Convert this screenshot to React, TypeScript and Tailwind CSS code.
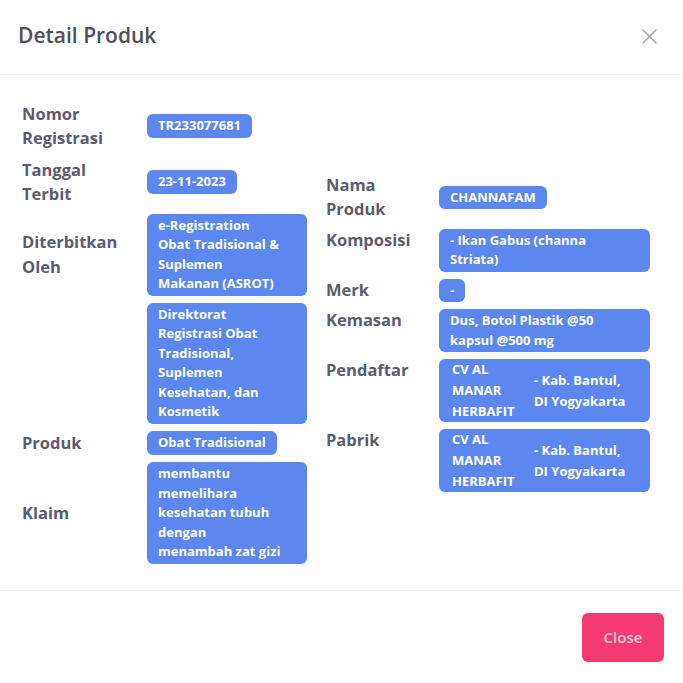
import React from "react";

const font = { fontFamily: "'Open Sans', Lato, sans-serif" };

function Badge({ lines, full }: { lines: string[]; full?: boolean }) {
  return (
    <div
      className={`${full ? "w-full" : "w-fit"} rounded-[6px] bg-[#5b87ef] px-[11px] py-[2px] text-[13px] font-bold leading-[19.5px] text-white`}
    >
      {lines.map((l, i) => (
        <span key={i} className="block whitespace-nowrap">
          {l}
        </span>
      ))}
    </div>
  );
}

function Label({ lines }: { lines: string[] }) {
  return (
    <div className="text-[16.5px] font-bold leading-[24.5px] text-[#5c5c6c]">
      {lines.map((l, i) => (
        <span key={i} className="block whitespace-nowrap">
          {l}
        </span>
      ))}
    </div>
  );
}

function CompanyBadge() {
  return (
    <div className="flex w-full items-center gap-[10px] rounded-[6px] bg-[#5b87ef] px-[13px] py-0 text-[13px] font-bold leading-[21px] text-white">
      <div className="w-[72px]">
        <span className="block whitespace-nowrap">CV AL</span>
        <span className="block whitespace-nowrap">MANAR</span>
        <span className="block whitespace-nowrap">HERBAFIT</span>
      </div>
      <div>
        <span className="block whitespace-nowrap">- Kab. Bantul,</span>
        <span className="block whitespace-nowrap">DI Yogyakarta</span>
      </div>
    </div>
  );
}

export default function App() {
  return (
    <div className="flex h-[683px] w-[683px] flex-col bg-white" style={font}>
      {/* Header */}
      <div className="flex h-[75px] items-center justify-between border-b border-[#eeeef0] pl-[18px] pr-[26px]">
        <h1 className="-mt-[2px] text-[21px] font-semibold text-[#4f4f59]">Detail Produk</h1>
        <svg width="15" height="15" viewBox="0 0 15 15" className="-mt-[1px] text-[#a9a9ae]">
          <path d="M1 1 L14 14 M14 1 L1 14" stroke="currentColor" strokeWidth="1.6" strokeLinecap="round" />
        </svg>
      </div>

      {/* Body */}
      <div className="flex flex-1 items-center pl-[22px] pr-[33px]">
        {/* Left table */}
        <div className="grid w-[285px] grid-cols-[125px_160px] gap-y-[7px]">
          <div className="flex items-center">
            <Label lines={["Nomor", "Registrasi"]} />
          </div>
          <div className="flex items-center">
            <Badge lines={["TR233077681"]} />
          </div>

          <div className="flex items-center">
            <Label lines={["Tanggal", "Terbit"]} />
          </div>
          <div className="flex items-center">
            <Badge lines={["23-11-2023"]} />
          </div>

          <div className="flex items-center">
            <Label lines={["Diterbitkan", "Oleh"]} />
          </div>
          <div>
            <Badge full lines={["e-Registration", "Obat Tradisional &", "Suplemen", "Makanan (ASROT)"]} />
          </div>

          <div />
          <div>
            <Badge
              full
              lines={["Direktorat", "Registrasi Obat", "Tradisional,", "Suplemen", "Kesehatan, dan", "Kosmetik"]}
            />
          </div>

          <div className="flex items-center">
            <Label lines={["Produk"]} />
          </div>
          <div className="flex items-center">
            <Badge lines={["Obat Tradisional"]} />
          </div>

          <div className="flex items-center">
            <Label lines={["Klaim"]} />
          </div>
          <div>
            <Badge full lines={["membantu", "memelihara", "kesehatan tubuh", "dengan", "menambah zat gizi"]} />
          </div>
        </div>

        {/* Right table */}
        <div className="ml-[19px] grid w-[324px] grid-cols-[113px_211px] gap-y-[7px]">
          <div className="flex items-center">
            <Label lines={["Nama", "Produk"]} />
          </div>
          <div className="flex items-center">
            <Badge lines={["CHANNAFAM"]} />
          </div>

          <div className="-mt-[1px]">
            <Label lines={["Komposisi"]} />
          </div>
          <div>
            <Badge full lines={["- Ikan Gabus (channa", "Striata)"]} />
          </div>

          <div className="-mt-[1px]">
            <Label lines={["Merk"]} />
          </div>
          <div>
            <Badge lines={["-"]} />
          </div>

          <div className="-mt-[1px]">
            <Label lines={["Kemasan"]} />
          </div>
          <div>
            <Badge full lines={["Dus, Botol Plastik @50", "kapsul @500 mg"]} />
          </div>

          <div className="-mt-[1px]">
            <Label lines={["Pendaftar"]} />
          </div>
          <div>
            <CompanyBadge />
          </div>

          <div className="-mt-[1px]">
            <Label lines={["Pabrik"]} />
          </div>
          <div>
            <CompanyBadge />
          </div>
        </div>
      </div>

      {/* Footer */}
      <div className="flex h-[93px] items-center justify-end border-t border-[#eeeef0] pr-[19px]">
        <button className="h-[49px] w-[82px] rounded-[6px] bg-[#f43a72] text-[15px] font-semibold text-[#f9c7da]">
          Close
        </button>
      </div>
    </div>
  );
}
